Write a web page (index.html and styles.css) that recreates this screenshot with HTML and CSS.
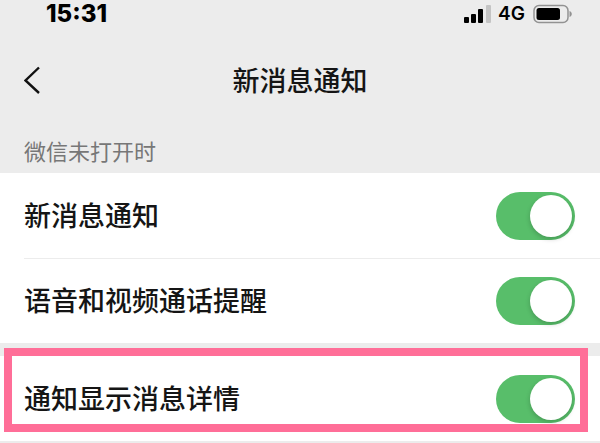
FILE: index.html
```html
<!DOCTYPE html>
<html lang="zh-CN">
<head>
    <meta charset="UTF-8">
    <meta name="viewport" content="width=device-width, initial-scale=1.0">
    <title>新消息通知</title>
    <link rel="stylesheet" href="styles.css">
</head>
<body>

<div class="status-bar">
    <span class="time">15:31</span>
    <div class="status-icons">
        <svg class="signal" width="28" height="20" viewBox="0 0 28 20" aria-hidden="true">
            <rect x="0" y="13" width="5" height="6" rx="1"/>
            <rect x="7" y="10" width="5" height="9" rx="1"/>
            <rect x="14" y="5" width="5" height="14" rx="1"/>
            <rect x="22" y="1" width="5" height="18" rx="1" fill="#c4c4c4"/>
        </svg>
        <span class="network">4G</span>
        <svg class="battery" width="40" height="20" viewBox="0 0 40 20" aria-hidden="true">
            <rect x="1" y="1.5" width="34" height="17" rx="5" fill="none" stroke="#929292" stroke-width="1.5"/>
            <rect x="3.5" y="4" width="23.5" height="12" rx="2.5"/>
            <path d="M36.500 7c3 1 3 5 0 6z" fill="#929292"/>
        </svg>
    </div>
</div>

<header class="nav">
    <button class="back" aria-label="返回">
        <svg width="18" height="28" viewBox="0 0 18 28" aria-hidden="true">
            <path d="M15 1.500L1.500 14.500 15 27" fill="none" stroke="#111" stroke-width="2.400"/>
        </svg>
    </button>
    <h1>新消息通知</h1>
</header>

<main>
    <h2 class="section-title">微信未打开时</h2>
    <div class="group">
        <div class="row">
            <label for="new_msg">新消息通知</label>
            <input type="checkbox" class="switch" id="new_msg" checked>
        </div>
        <div class="row">
            <label for="call">语音和视频通话提醒</label>
            <input type="checkbox" class="switch" id="call" checked>
        </div>
    </div>
    <div class="group highlight">
        <div class="row">
            <label for="detail">通知显示消息详情</label>
            <input type="checkbox" class="switch" id="detail" checked>
        </div>
    </div>
</main>

</body>
</html>
```

FILE: styles.css
```css
* {
    box-sizing: border-box;
}
body {
    margin: 0;
    background-color: #ececec;
    color: #151515;
    font-family: "Noto Sans CJK SC", sans-serif;
}
.status-bar {
    display: flex;
    justify-content: space-between;
    align-items: center;
    height: 27px;
    padding: 0 27px 0 46px;
    color: #000;
    font-family: Inter, sans-serif;
}
.time {
    font-size: 24px;
    font-weight: 800;
}
.status-icons {
    display: flex;
    align-items: center;
}
.network {
    margin: 0 8px 0 6px;
    font-size: 19px;
    font-weight: 600;
}
.nav {
    display: grid;
    grid-template-columns: 48px 1fr 48px;
    align-items: center;
    height: 106px;
    padding: 0 24px;
}
.back {
    display: flex;
    padding: 0;
    border: none;
    background: none;
    cursor: pointer;
}
h1 {
    margin: 0;
    text-align: center;
    font-size: 27px;
    font-weight: 500;
    line-height: 40px;
}
.section-title {
    margin: 0;
    padding: 0 24px 6px;
    color: #777;
    font-size: 22px;
    font-weight: 400;
    line-height: 34px;
}
.group {
    margin-bottom: 13px;
    padding-left: 24px;
    background-color: #fff;
}
.row {
    display: flex;
    justify-content: space-between;
    align-items: center;
    height: 85px;
    padding-right: 25px;
}
.row + .row {
    border-top: 1px solid #ececec;
}
.row label {
    padding-bottom: 2px;
    font-size: 27px;
    font-weight: 500;
    line-height: 40px;
}
.switch {
    appearance: none;
    display: flex;
    align-items: center;
    justify-content: flex-end;
    width: 79px;
    height: 48px;
    margin: 0;
    padding: 3px;
    border-radius: 24px;
    background-color: #ccc;
    cursor: pointer;
}
.switch::before {
    content: "";
    width: 42px;
    height: 42px;
    border-radius: 50%;
    background-color: #fff;
    box-shadow: 0 2px 5px rgba(0, 0, 0, 0.2);
}
.switch:not(:checked) {
    justify-content: flex-start;
}
.switch:checked {
    background-color: #58be6a;
}
.highlight {
    position: relative;
    margin-bottom: 0;
}
/* frame drawn over the row and the gap above it */
.highlight::after {
    content: "";
    position: absolute;
    top: -8px;
    right: 12px;
    bottom: 9px;
    left: 4px;
    border: 8px solid #ff6e98;
    pointer-events: none;
}
```
